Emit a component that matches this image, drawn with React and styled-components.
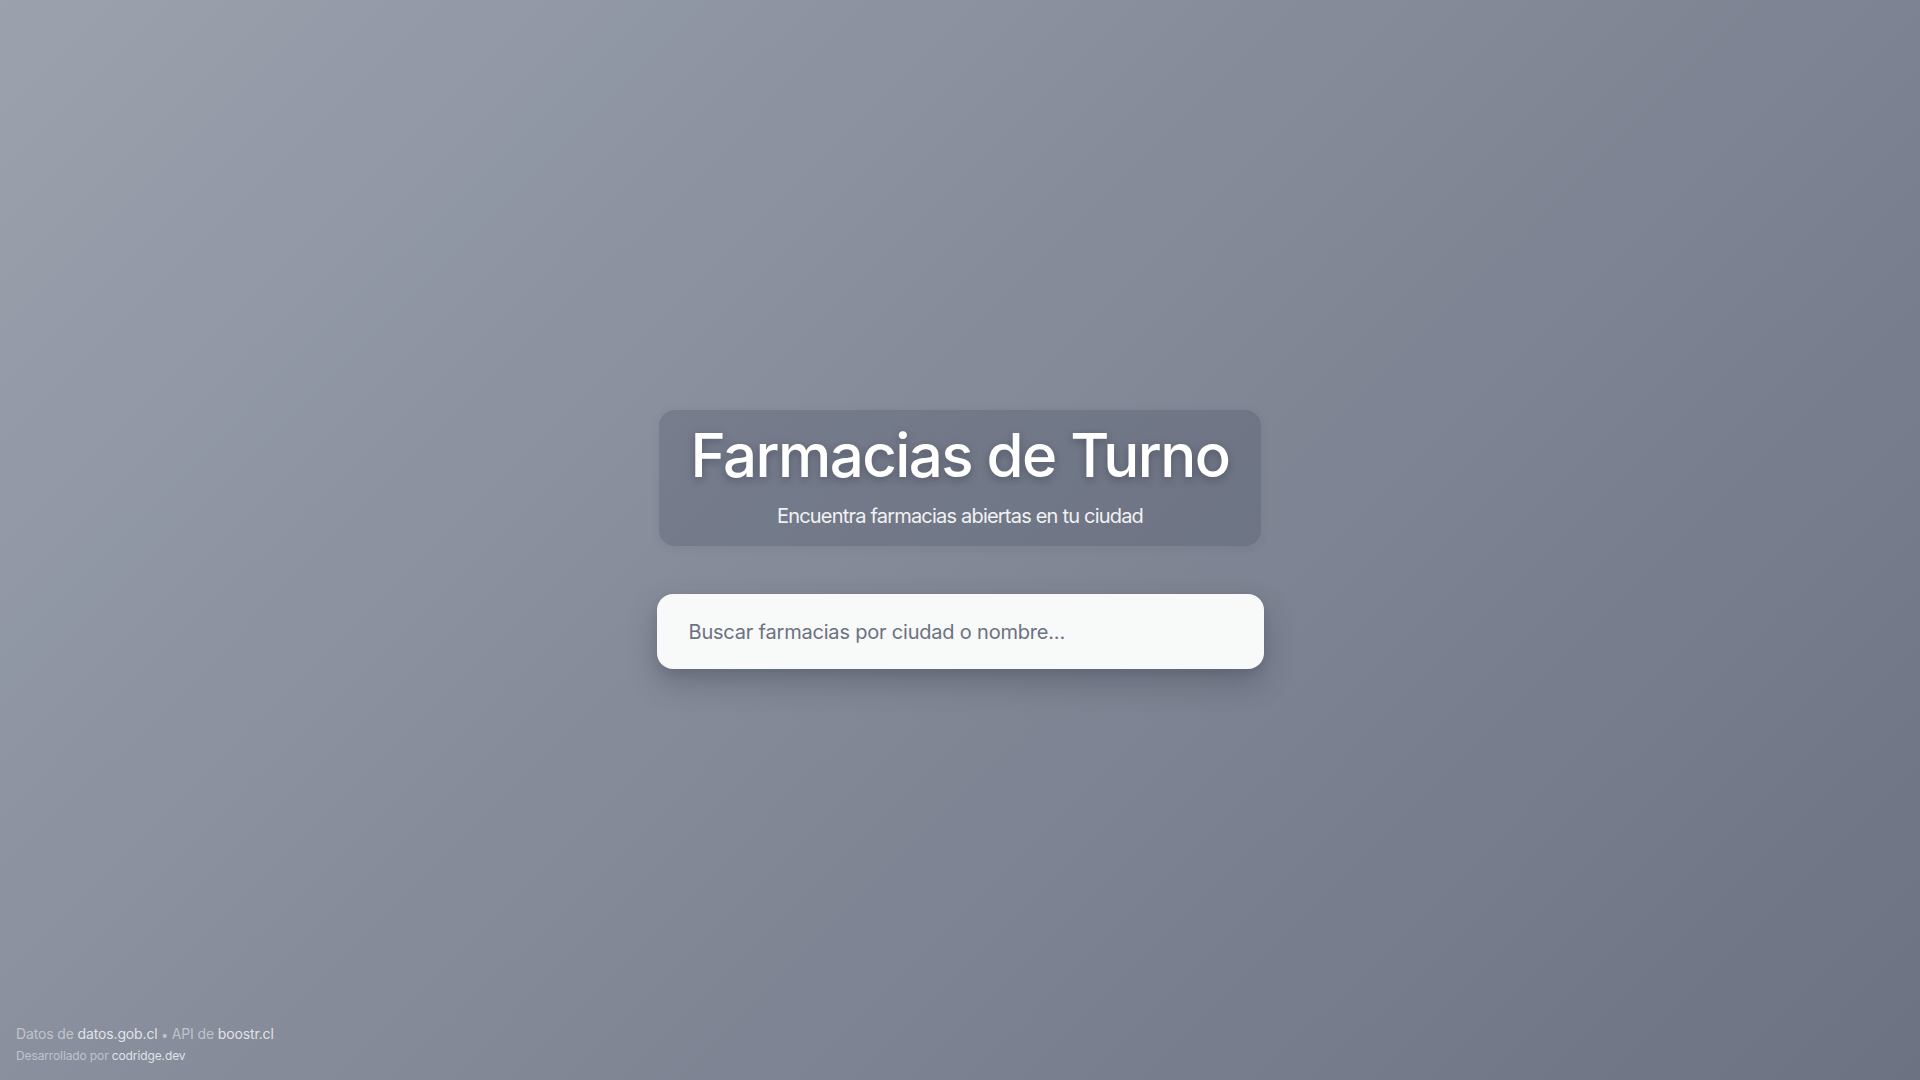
import styled, { createGlobalStyle } from "styled-components";

const GlobalStyle = createGlobalStyle`
  html, body {
    margin: 0;
    padding: 0;
    height: 100%;
  }
  body {
    font-family: Inter, "Noto Sans", "Liberation Sans", sans-serif;
    background: linear-gradient(135deg, #9ba2ae 0%, #858b99 45%, #6c7282 100%);
    min-height: 100vh;
  }
  * {
    box-sizing: border-box;
  }
`;

function App() {
  return (
    <>
      <GlobalStyle />
      <Page>
        <Main>
          <Header>
            <Title>Farmacias de Turno</Title>
            <Subtitle>Encuentra farmacias abiertas en tu ciudad</Subtitle>
          </Header>
          <SearchBox>
            <SearchInput
              type="text"
              placeholder="Buscar farmacias por ciudad o nombre..."
            />
          </SearchBox>
        </Main>
        <Footer>
          <p className="sources">
            Datos de <a href="/">datos.gob.cl</a> <span className="dot">•</span> API de{" "}
            <a href="/">boostr.cl</a>
          </p>
          <p className="credits">
            Desarrollado por <a href="/">codridge.dev</a>
          </p>
        </Footer>
      </Page>
    </>
  );
}

const Page = styled.div`
  min-height: 100vh;
  display: flex;
  flex-direction: column;
  position: relative;
`;

const Main = styled.main`
  flex: 1;
  display: flex;
  flex-direction: column;
  align-items: center;
  justify-content: center;
  gap: 48px;
  padding-bottom: 1px;
`;

const Header = styled.header`
  background: rgba(70, 76, 92, 0.28);
  border-radius: 16px;
  padding: 15px 32px 16px;
  text-align: center;
  box-shadow: 0 2px 10px rgba(40, 45, 60, 0.08);
`;

const Title = styled.h1`
  margin: 0;
  font-size: 60px;
  line-height: 1;
  font-weight: 500;
  letter-spacing: -0.026em;
  color: #ffffff;
  text-shadow: 0 3px 8px rgba(30, 35, 50, 0.35);
`;

const Subtitle = styled.p`
  margin: 17px 0 0;
  font-size: 20px;
  line-height: 28px;
  letter-spacing: -0.04em;
  color: #f1f2f4;
`;

const SearchBox = styled.div`
  width: 607px;
  height: 75px;
  background: #f8f9f9;
  border-radius: 16px;
  box-shadow: 0 14px 30px rgba(45, 50, 65, 0.3), 0 4px 8px rgba(45, 50, 65, 0.12);
  display: flex;
  align-items: center;
`;

const SearchInput = styled.input`
  width: 100%;
  height: 100%;
  border: none;
  outline: none;
  background: transparent;
  padding: 0 32px;
  font-family: Inter, "Noto Sans", "Liberation Sans", sans-serif;
  font-size: 20px;
  letter-spacing: -0.01em;
  color: #374151;

  &::placeholder {
    color: #6b7280;
  }
`;

const Footer = styled.footer`
  position: absolute;
  left: 16px;
  bottom: 16px;

  p {
    margin: 0;
    color: rgba(230, 232, 236, 0.6);
    letter-spacing: -0.01em;
  }
  .sources {
    font-size: 14px;
    line-height: 20px;
  }
  .credits {
    font-size: 12px;
    line-height: 16px;
    margin-top: 3px;
  }
  .dot {
    font-size: 12px;
  }
  a {
    color: rgba(240, 241, 244, 0.88);
    text-decoration: none;
  }
`;

export default App;
